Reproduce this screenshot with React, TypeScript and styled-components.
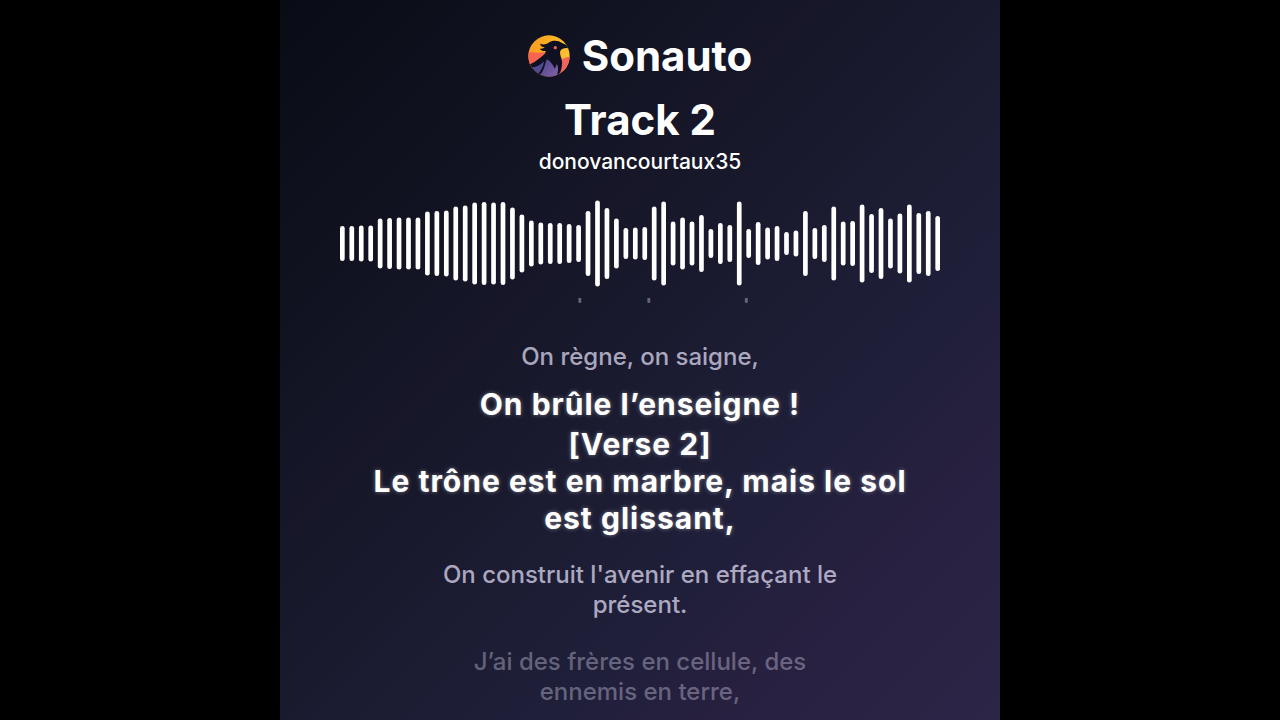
import React from 'react';
import styled, { createGlobalStyle } from 'styled-components';

const GlobalStyle = createGlobalStyle`
  * { box-sizing: border-box; }
  body {
    margin: 0;
    background: #000;
    color: #fff;
    font-family: Inter, "Liberation Sans", sans-serif;
  }
`;

const Stage = styled.main`
  display: flex;
  flex-direction: column;
  align-items: center;
  width: 100%;
  max-width: 720px;
  height: 100vh;
  margin: 0 auto;
  padding: 30px 60px 0;
  overflow: hidden;
  background: linear-gradient(135deg, #090c15 0%, #19192d 46%, #1f1f3a 68%, #27203f 80%, #2c2547 100%);
`;

const Brand = styled.header`
  display: flex;
  align-items: center;
  gap: 12px;
  font-size: 42px;
  font-weight: 700;
  line-height: 52px;
`;

const Title = styled.h1`
  margin: 12px 0 0;
  font-size: 42px;
  font-weight: 700;
  line-height: 52px;
`;

const Artist = styled.p`
  margin: 2px 0 0;
  font-size: 21px;
  font-weight: 500;
  line-height: 28px;
`;

const Wave = styled.svg`
  display: block;
  flex: none;
  width: 100%;
  height: 88px;
  margin-top: 24px;
  fill: #fff;
`;

const Lyrics = styled.section`
  flex: 1;
  width: 100%;
  min-height: 0;
  margin-top: 10px;
  overflow: hidden;
`;

const Lines = styled.div`
  display: flex;
  flex-direction: column;
  margin-top: -23px;
  text-align: center;
`;

const Line = styled.p<{ $opacity: number; $gap: number }>`
  margin: ${(p) => p.$gap}px 0 0;
  padding: 0 85px;
  font-size: 24px;
  font-weight: 500;
  line-height: 30px;
  color: rgba(236, 232, 255, ${(p) => p.$opacity});
`;

const ActiveLine = styled.p<{ $gap: number }>`
  margin: ${(p) => p.$gap}px 0 0;
  padding: 0 20px;
  font-size: 30px;
  font-weight: 700;
  line-height: 37px;
  letter-spacing: 1px;
  text-shadow: 0 0 4px rgba(255, 255, 255, 0.4);
`;

const levels = [
  35, 35, 36, 36, 50, 51, 52, 52, 52, 64, 65, 66, 74, 76, 82, 83,
  82, 83, 72, 58, 46, 42, 41, 41, 39, 37, 65, 86, 71, 50, 31, 32,
  33, 74, 84, 44, 52, 44, 57, 29, 41, 37, 84, 29, 43, 32, 35, 23,
  26, 65, 31, 37, 74, 44, 45, 78, 59, 71, 50, 60, 78, 61, 65, 55,
];

function Logo() {
  return (
    <svg width="42" height="42" viewBox="12 11 126 126" aria-hidden="true">
      <defs>
        <clipPath id="disc"><circle cx="75" cy="74" r="62" /></clipPath>
        <linearGradient id="sun" x1="0" y1="0" x2="1" y2="0">
          <stop offset="0" stopColor="#fb9a22" />
          <stop offset="0.5" stopColor="#fdb022" />
          <stop offset="1" stopColor="#ffc331" />
        </linearGradient>
        <linearGradient id="chest" x1="0" y1="0" x2="1" y2="1">
          <stop offset="0" stopColor="#4b448c" />
          <stop offset="1" stopColor="#8462a8" />
        </linearGradient>
      </defs>
      <g clipPath="url(#disc)">
        <rect x="12" y="11" width="126" height="126" fill="url(#sun)" />
        <path d="M10 66 C24 57 36 69 62 62 L62 110 L10 112Z" fill="#f8644f" />
        <path d="M140 76 C126 76 114 82 104 90 L100 140 L140 140Z" fill="#f5625a" />
        <path d="M10 100 C28 98 42 84 60 70 L104 70 C112 96 108 122 100 140 L10 140Z" fill="#0f1022" />
        <path d="M25 108 C40 107 50 100 60 90 C58 106 52 118 42 128 C34 122 29 116 25 108Z" fill="#514a92" />
        <path d="M69 82 C60 104 62 116 48 130 C64 140 84 138 98 133 C104 119 103 106 99 96 C97 102 95 108 92 112 C87 98 78 90 69 82Z" fill="url(#chest)" />
        <path d="M48 37 C58 41 66 39 74 34 C84 27 102 26 114 35 C124 38 132 43 138 52 C126 48 115 50 109 58 C105 70 117 84 114 101 C112 118 108 127 103 132 C107 114 102 98 91 86 C80 88 66 86 54 76 C61 70 65 64 65 59 C57 60 51 57 47 52 C55 53 60 51 62 48 C54 47 49 43 48 37Z" fill="#0f1022" />
      </g>
      <circle cx="94" cy="49" r="5" fill="#f8644f" />
    </svg>
  );
}

function Waveform() {
  return (
    <Wave viewBox="0 0 600 88" role="img" aria-label="Waveform">
      {levels.map((level, i) => (
        <rect key={i} x={i * 9.45} y={43.5 - level / 2} width="4.7" height={level} rx="2.35" />
      ))}
    </Wave>
  );
}

export default function App() {
  return (
    <>
      <GlobalStyle />
      <Stage>
        <Brand><Logo />Sonauto</Brand>
        <Title>Track 2</Title>
        <Artist>donovancourtaux35</Artist>
        <Waveform />
        <Lyrics>
          <Lines>
            <Line $opacity={0.4} $gap={0}>Plus de place pour l’espoir.</Line>
            <Line $opacity={0.7} $gap={37}>On règne, on saigne,</Line>
            <ActiveLine $gap={14}>On brûle l’enseigne !</ActiveLine>
            <ActiveLine $gap={3}>[Verse 2]<br />Le trône est en marbre, mais le sol est glissant,</ActiveLine>
            <Line $opacity={0.7} $gap={23}>On construit l'avenir en effaçant le présent.</Line>
            <Line $opacity={0.35} $gap={27}>J’ai des frères en cellule, des ennemis en terre,</Line>
          </Lines>
        </Lyrics>
      </Stage>
    </>
  );
}
